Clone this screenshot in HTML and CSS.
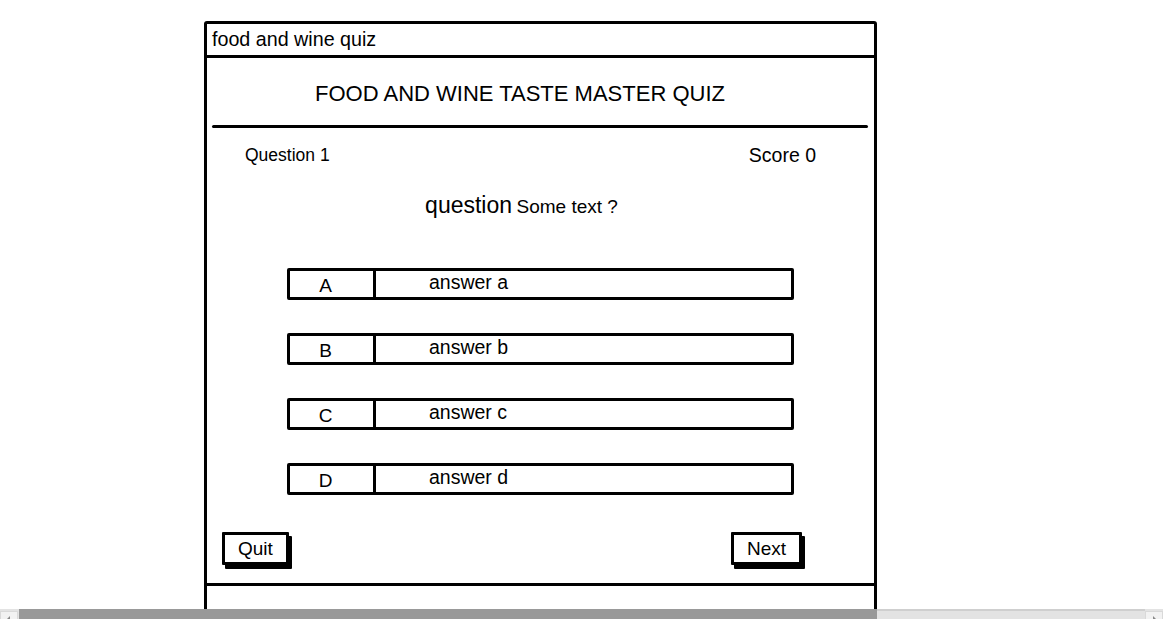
FILE: index.html
```html
<!DOCTYPE html>
<html lang="en">
<head>
<meta charset="utf-8">
<title>food and wine quiz</title>
<link rel="stylesheet" href="styles.css">
</head>
<body>
<div class="frame">
  <div class="titlebar">food and wine quiz</div>
  <h1 class="heading">FOOD AND WINE TASTE MASTER QUIZ</h1>
  <div class="rule"></div>
  <div class="meta">
    <span class="qnum">Question 1</span>
    <span class="score">Score 0</span>
  </div>
  <div class="question"><span class="q-label">question</span> <span class="q-text">Some text ?</span></div>
  <div class="answers">
    <div class="answer answer-a"><span class="letter">A</span><span class="text">answer a</span></div>
    <div class="answer answer-b"><span class="letter">B</span><span class="text">answer b</span></div>
    <div class="answer answer-c"><span class="letter">C</span><span class="text">answer c</span></div>
    <div class="answer answer-d"><span class="letter">D</span><span class="text">answer d</span></div>
  </div>
  <div class="actions">
    <button class="btn">Quit</button>
    <button class="btn btn-next">Next</button>
  </div>
  <div class="footer"></div>
</div>
<div class="scrollbar">
  <div class="sb-btn"><span class="sb-arrow sb-left"></span></div>
  <div class="sb-thumb"></div>
  <div class="sb-track"></div>
  <div class="sb-btn"><span class="sb-arrow sb-right"></span></div>
</div>
</body>
</html>
```
FILE: styles.css
```css
html, body {
  margin: 0;
  padding: 0;
  overflow: hidden;
  background: #fff;
}
body {
  font-family: "Liberation Sans", Arial, sans-serif;
  color: #000;
}
.frame {
  width: 667px;
  margin: 21px 0 0 204px;
  border: 3px solid #000;
  border-radius: 3px 3px 0 0;
  box-sizing: content-box;
}
.titlebar {
  height: 31px;
  line-height: 31px;
  padding-left: 5px;
  font-size: 19.7px;
  border-bottom: 3px solid #000;
}
.heading {
  margin: 0;
  padding: 23px 41px 18px 0;
  line-height: 26px;
  font-size: 22px;
  font-weight: normal;
  text-align: center;
}
.rule {
  height: 3px;
  margin: 0 6px 0 5px;
  background: #000;
  border-radius: 2px;
}
.meta {
  display: flex;
  justify-content: space-between;
  padding: 17px 58px 0 38px;
  line-height: 20px;
}
.qnum {
  font-size: 17.5px;
}
.score {
  font-size: 19.5px;
}
.question {
  margin-top: 28px;
  padding-right: 38px;
  line-height: 24px;
  text-align: center;
}
.q-label {
  font-size: 23px;
}
.q-text {
  font-size: 19px;
}
.answers {
  display: flex;
  flex-direction: column;
  gap: 33px;
  margin-top: 48px;
}
.answer {
  display: flex;
  box-sizing: border-box;
  width: 507px;
  height: 32px;
  margin: 0 auto;
  border: 3px solid #000;
  border-radius: 2px;
}
.letter {
  box-sizing: border-box;
  width: 86px;
  padding-right: 12px;
  border-right: 3px solid #000;
  text-align: center;
  font-size: 19px;
  line-height: 30px;
}
.text {
  padding-left: 53px;
  font-size: 19.5px;
  line-height: 23px;
}
.actions {
  display: flex;
  justify-content: space-between;
  padding: 37px 72px 18px 15px;
  border-bottom: 3px solid #000;
}
.btn {
  box-sizing: border-box;
  height: 33px;
  padding: 0 13px;
  background: #fff;
  border: 3px solid #000;
  border-radius: 1px;
  box-shadow: 3px 4px 0 #000;
  font-family: "Liberation Sans", Arial, sans-serif;
  font-size: 19px;
  color: #000;
}
.footer {
  height: 40px;
}
.scrollbar {
  position: fixed;
  left: 0;
  right: 0;
  bottom: 0;
  height: 10px;
  display: flex;
  background: #e3e3e3;
}
.sb-btn {
  box-sizing: border-box;
  width: 18px;
  margin-top: 2px;
  background: #f2f2f2;
  border: 1px solid #d9d9d9;
  border-bottom: none;
  position: relative;
  overflow: hidden;
}
.sb-arrow {
  position: absolute;
  top: 4px;
  width: 0;
  height: 0;
  border-top: 3px solid transparent;
  border-bottom: 3px solid transparent;
}
.sb-left {
  left: 6px;
  border-right: 3px solid #888;
}
.sb-right {
  left: 7px;
  border-left: 3px solid #888;
}
.sb-thumb {
  width: 858px;
  margin-left: 1px;
  background: #999;
}
.sb-track {
  flex: 1;
  border-top: 2px solid #cfcfcf;
  background: #e3e3e3;
}
```
